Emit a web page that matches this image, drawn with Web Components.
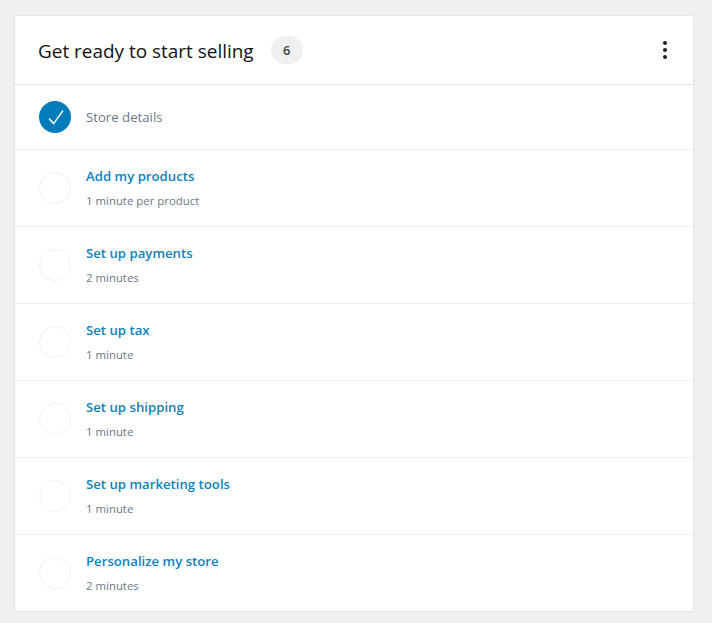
<!DOCTYPE html>
<html>
<head>
<meta charset="utf-8">
<title>Task list</title>
<style>
  html, body { margin: 0; background: #f0f0f0; }
  body { padding: 15px 18px 11px 14px; font-family: "Open Sans", "Noto Sans", sans-serif; }
</style>
</head>
<body>
<task-card heading="Get ready to start selling" count="6">
  <task-row done title="Store details"></task-row>
  <task-row title="Add my products" time="1 minute per product"></task-row>
  <task-row title="Set up payments" time="2 minutes"></task-row>
  <task-row title="Set up tax" time="1 minute"></task-row>
  <task-row title="Set up shipping" time="1 minute"></task-row>
  <task-row title="Set up marketing tools" time="1 minute"></task-row>
  <task-row title="Personalize my store" time="2 minutes"></task-row>
</task-card>

<script>
class TaskCard extends HTMLElement {
  constructor() {
    super()
    this.shadow = this.attachShadow({ mode: 'open' })
  }

  connectedCallback() {
    this.shadow.innerHTML = `
      <style>
        :host {
          display: block;
          background: #fff;
          border: 1px solid #e2e4e7;
          border-radius: 2px;
          box-sizing: border-box;
          width: 680px;
        }
        .header {
          display: flex;
          align-items: center;
          height: 68px;
          padding: 0 26px 0 24px;
          border-bottom: 1px solid #e2e4e7;
        }
        h2 {
          margin: 2px 0 0 -1px;
          font-size: 18.95px;
          font-weight: 400;
          color: #111;
          line-height: 28px;
        }
        .badge {
          display: flex;
          align-items: center;
          justify-content: center;
          width: 32px;
          height: 28px;
          margin-left: 17px;
          border-radius: 14px;
          background: #f0f0f0;
          color: #444;
          font-size: 13px;
          font-weight: 600;
        }
        .menu { margin-left: auto; display: block; }
      </style>
      <div class="header">
        <h2>${this.getAttribute('heading')}</h2>
        <span class="badge">${this.getAttribute('count')}</span>
        <svg class="menu" width="4" height="18" viewBox="0 0 4 18" fill="#1e1e1e">
          <circle cx="2" cy="2" r="2"/>
          <circle cx="2" cy="9" r="2"/>
          <circle cx="2" cy="16" r="2"/>
        </svg>
      </div>
      <slot></slot>
    `
  }
}

class TaskRow extends HTMLElement {
  constructor() {
    super()
    this.shadow = this.attachShadow({ mode: 'open' })
  }

  connectedCallback() {
    const done = this.hasAttribute('done')
    const time = this.getAttribute('time')
    this.shadow.innerHTML = `
      <style>
        :host {
          display: flex;
          align-items: center;
          box-sizing: border-box;
          height: ${done ? 65 : 77}px;
          padding: 0 24px;
          border-bottom: 1px solid #f0f0f0;
        }
        :host(:last-child) { border-bottom: 0; height: 76px; }
        .mark {
          flex: none;
          display: block;
          width: 32px;
          height: 32px;
          margin-right: 15px;
        }
        .text { display: flex; flex-direction: column; gap: 7px; padding-top: ${done ? 0 : 1}px; }
        .title {
          font-size: 13.2px;
          line-height: 18px;
          font-weight: 600;
          color: #1081bd;
        }
        .title.done { font-weight: 400; color: #6c7781; }
        .time {
          font-size: 11.4px;
          line-height: 18px;
          color: #6c7781;
        }
      </style>
      ${done
        ? `<svg class="mark" viewBox="0 0 32 32">
             <circle cx="16" cy="16" r="16" fill="#007cba"/>
             <path d="M10 17.6l4.6 5L24 9.6" fill="none" stroke="#fff" stroke-width="1.5"/>
           </svg>`
        : `<svg class="mark" viewBox="0 0 32 32">
             <circle cx="16" cy="16" r="15.5" fill="#fff" stroke="#f0f0f0"/>
           </svg>`}
      <div class="text">
        <span class="title${done ? ' done' : ''}">${this.getAttribute('title')}</span>
        ${time ? `<span class="time">${time}</span>` : ''}
      </div>
    `
  }
}

customElements.define('task-card', TaskCard)
customElements.define('task-row', TaskRow)
</script>
</body>
</html>
